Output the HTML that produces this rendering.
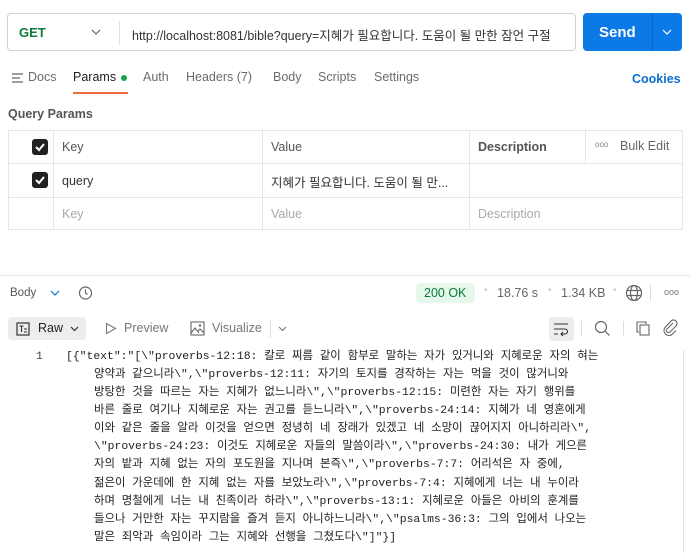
<!DOCTYPE html>
<html><head><meta charset="utf-8"><style>
*{box-sizing:border-box;margin:0;padding:0}
body{width:690px;height:553px;background:#fff;font-family:"Liberation Sans","Noto Sans CJK KR",sans-serif;color:#212121;position:relative;overflow:hidden;font-size:12.5px}
.a{position:absolute;white-space:nowrap}
.tab{position:absolute;top:70px;font-size:12.5px;color:#6b6b6b}
.code{position:absolute;left:0;font-family:"Liberation Mono","Noto Sans CJK KR",monospace;font-size:11.4px;color:#212121;white-space:pre;line-height:18.1px}
.cb{position:absolute;width:16px;height:16px;background:#212121;border-radius:3px}
.cb svg{position:absolute;left:2px;top:2px}
</style></head><body>
<div class="a" style="left:7px;top:13px;width:569px;height:38px;border:1px solid #d0d0d0;border-radius:4px"></div>
<div class="a" style="left:19px;top:25px;font-weight:bold;color:#0f7a3a;font-size:13px">GET</div>
<svg class="a" style="left:91px;top:29px" width="10" height="7"><path d="M1 1l4 4 4-4" stroke="#666" fill="none" stroke-width="1.2"/></svg>
<div class="a" style="left:119px;top:21px;width:1px;height:24px;background:#e0e0e0"></div>
<div class="a" style="left:132px;top:25px;font-size:12.5px;color:#333">http://localhost:8081/bible?query=지혜가 필요합니다. 도움이 될 만한 잠언 구절</div>
<div class="a" style="left:583px;top:13px;width:99px;height:38px;background:#0b7ae6;border-radius:4px"></div>
<div class="a" style="left:652px;top:13px;width:1px;height:38px;background:#0a68c4"></div>
<div class="a" style="left:599px;top:24px;font-weight:bold;color:#fff;font-size:15px">Send</div>
<svg class="a" style="left:662px;top:29px" width="10" height="7"><path d="M1 1l4 4 4-4" stroke="#fff" fill="none" stroke-width="1.2"/></svg>
<svg class="a" style="left:12px;top:72px" width="12" height="12"><path d="M0 2h11M0 6h8M0 10h11" stroke="#666" stroke-width="1.2"/></svg>
<div class="tab" style="left:28px">Docs</div>
<div class="tab" style="left:73px;color:#212121">Params</div>
<div class="a" style="left:121px;top:75px;width:6px;height:6px;border-radius:50%;background:#1aa34a"></div>
<div class="a" style="left:73px;top:92px;width:55px;height:2px;background:#f26b3a"></div>
<div class="tab" style="left:143px">Auth</div>
<div class="tab" style="left:186px">Headers (7)</div>
<div class="tab" style="left:273px">Body</div>
<div class="tab" style="left:318px">Scripts</div>
<div class="tab" style="left:374px">Settings</div>
<div class="a" style="left:632px;top:72px;color:#0b6fd0;font-weight:bold;font-size:12.5px">Cookies</div>
<div class="a" style="left:8px;top:107px;color:#555;font-weight:bold;font-size:12.5px">Query Params</div>
<div class="a" style="left:8px;top:130px;width:675px;height:100px;border:1px solid #e6e6e6"></div>
<div class="a" style="left:8px;top:163px;width:675px;height:1px;background:#e6e6e6"></div>
<div class="a" style="left:8px;top:197px;width:675px;height:1px;background:#e6e6e6"></div>
<div class="a" style="left:53px;top:130px;width:1px;height:100px;background:#e6e6e6"></div>
<div class="a" style="left:262px;top:130px;width:1px;height:100px;background:#e6e6e6"></div>
<div class="a" style="left:469px;top:130px;width:1px;height:100px;background:#e6e6e6"></div>
<div class="a" style="left:585px;top:130px;width:1px;height:33px;background:#e6e6e6"></div>
<div class="cb" style="left:32px;top:139px"><svg width="12" height="12"><path d="M2 6l3 3 5-6" stroke="#fff" stroke-width="2" fill="none"/></svg></div>
<div class="cb" style="left:32px;top:172px"><svg width="12" height="12"><path d="M2 6l3 3 5-6" stroke="#fff" stroke-width="2" fill="none"/></svg></div>
<div class="a" style="left:62px;top:140px;color:#555">Key</div>
<div class="a" style="left:271px;top:140px;color:#555">Value</div>
<div class="a" style="left:478px;top:140px;color:#555;font-weight:bold">Description</div>
<div class="a" style="left:595px;top:140px;color:#888;font-size:8px">ooo</div>
<div class="a" style="left:620px;top:139px;color:#666">Bulk Edit</div>
<div class="a" style="left:62px;top:174px;color:#333">query</div>
<div class="a" style="left:271px;top:172px;color:#333">지혜가 필요합니다. 도움이 될 만...</div>
<div class="a" style="left:62px;top:207px;color:#aaa">Key</div>
<div class="a" style="left:271px;top:207px;color:#aaa">Value</div>
<div class="a" style="left:478px;top:207px;color:#aaa">Description</div>
<div class="a" style="left:0;top:275px;width:690px;height:1px;background:#e6e6e6"></div>
<div class="a" style="left:10px;top:287px;font-size:11.5px;color:#555">Body</div>
<svg class="a" style="left:50px;top:290px" width="10" height="7"><path d="M1 1l4 4 4-4" stroke="#0b6fd0" fill="none" stroke-width="1.2"/></svg>
<svg class="a" style="left:77px;top:285px" width="16" height="16"><circle cx="8.5" cy="8" r="6" stroke="#666" fill="none" stroke-width="1.2"/><path d="M8.5 4.5v3.5l2 1.5" stroke="#666" fill="none" stroke-width="1.2"/></svg>
<div class="a" style="left:416px;top:283px;width:59px;height:20px;background:#e5f8eb;border-radius:4px"></div>
<div class="a" style="left:424px;top:286px;color:#0a7c3b;font-size:12.5px">200 OK</div>
<div class="a" style="left:484px;top:285px;color:#ccc;font-size:10px">•</div>
<div class="a" style="left:497px;top:286px;color:#666">18.76 s</div>
<div class="a" style="left:548px;top:285px;color:#ccc;font-size:10px">•</div>
<div class="a" style="left:561px;top:286px;color:#666">1.34 KB</div>
<div class="a" style="left:613px;top:285px;color:#ccc;font-size:10px">•</div>
<svg class="a" style="left:625px;top:284px" width="18" height="18"><circle cx="9" cy="9" r="7.5" stroke="#666" fill="none" stroke-width="1.2"/><ellipse cx="9" cy="9" rx="3.5" ry="7.5" stroke="#666" fill="none" stroke-width="1.2"/><path d="M1.5 6.5h15M1.5 11.5h15" stroke="#666" stroke-width="1.2"/></svg>
<div class="a" style="left:650px;top:285px;width:1px;height:16px;background:#ddd"></div>
<div class="a" style="left:664px;top:287px;color:#777;font-size:9px">ooo</div>
<div class="a" style="left:8px;top:317px;width:78px;height:23px;background:#ededed;border-radius:4px"></div>
<svg class="a" style="left:16px;top:322px" width="14" height="14"><rect x="1" y="1" width="12" height="12" stroke="#333" fill="none" stroke-width="1.2"/><path d="M3.5 4h4M5.5 4v6M8 7h3M8 10h3" stroke="#333" stroke-width="1.1"/></svg>
<div class="a" style="left:38px;top:321px;color:#212121">Raw</div>
<svg class="a" style="left:70px;top:326px" width="9" height="6"><path d="M1 1l3.5 3.5 3.5-3.5" stroke="#333" fill="none" stroke-width="1.2"/></svg>
<svg class="a" style="left:105px;top:322px" width="12" height="13"><path d="M1.5 1.5l9 5-9 5z" stroke="#777" fill="none" stroke-width="1.1"/></svg>
<div class="a" style="left:124px;top:321px;color:#777">Preview</div>
<svg class="a" style="left:190px;top:321px" width="15" height="15"><rect x="1" y="1" width="13" height="13" stroke="#666" fill="none" stroke-width="1.1"/><path d="M1 12l4-5 4 5M8 10l2-2 4 4" stroke="#666" fill="none" stroke-width="1.1"/><circle cx="10" cy="4.5" r="1.2" fill="#666"/></svg>
<div class="a" style="left:212px;top:321px;color:#777">Visualize</div>
<div class="a" style="left:270px;top:320px;width:1px;height:18px;background:#ddd"></div>
<svg class="a" style="left:278px;top:326px" width="9" height="6"><path d="M1 1l3.5 3.5 3.5-3.5" stroke="#777" fill="none" stroke-width="1.1"/></svg>
<div class="a" style="left:549px;top:317px;width:25px;height:24px;background:#ededed;border-radius:3px"></div>
<svg class="a" style="left:553px;top:321px" width="17" height="16"><path d="M1 3h14M1 8h11a2.5 2.5 0 0 1 0 5H8M10 11l-2 2 2 2M1 13h4" stroke="#333" fill="none" stroke-width="1.1"/></svg>
<div class="a" style="left:581px;top:321px;width:1px;height:15px;background:#ddd"></div>
<svg class="a" style="left:594px;top:320px" width="17" height="17"><circle cx="7" cy="7" r="5.5" stroke="#666" fill="none" stroke-width="1.2"/><path d="M11 11l4.5 4.5" stroke="#666" stroke-width="1.2"/></svg>
<div class="a" style="left:623px;top:321px;width:1px;height:15px;background:#ddd"></div>
<svg class="a" style="left:635px;top:320px" width="16" height="17"><path d="M4 12H2V2h9v2" stroke="#666" fill="none" stroke-width="1.1"/><rect x="5" y="5" width="9" height="10" stroke="#666" fill="none" stroke-width="1.1"/></svg>
<svg class="a" style="left:662px;top:319px" width="17" height="18"><path d="M11 4l-6 6a2 2 0 0 0 3 3l6-6a3.5 3.5 0 0 0-5-5L3 8.5a5 5 0 0 0 7 7l4-4" stroke="#666" fill="none" stroke-width="1.1"/></svg>
<div class="a" style="left:683px;top:350px;width:1px;height:203px;background:#e0e0e0"></div>
<div class="code" style="left:36px;top:348px;color:#444">1</div>
<div class="code" style="left:66px;top:348px">[{"text":"[\"proverbs-12:18: 칼로 찌름 같이 함부로 말하는 자가 있거니와 지혜로운 자의 혀는</div>
<div class="code" style="left:94px;top:366px">양약과 같으니라\",\"proverbs-12:11: 자기의 토지를 경작하는 자는 먹을 것이 많거니와
방탕한 것을 따르는 자는 지혜가 없느니라\",\"proverbs-12:15: 미련한 자는 자기 행위를
바른 줄로 여기나 지혜로운 자는 권고를 듣느니라\",\"proverbs-24:14: 지혜가 네 영혼에게
이와 같은 줄을 알라 이것을 얻으면 정녕히 네 장래가 있겠고 네 소망이 끊어지지 아니하리라\",
\"proverbs-24:23: 이것도 지혜로운 자들의 말씀이라\",\"proverbs-24:30: 내가 게으른
자의 밭과 지혜 없는 자의 포도원을 지나며 본즉\",\"proverbs-7:7: 어리석은 자 중에,
젊은이 가운데에 한 지혜 없는 자를 보았노라\",\"proverbs-7:4: 지혜에게 너는 내 누이라
하며 명철에게 너는 내 친족이라 하라\",\"proverbs-13:1: 지혜로운 아들은 아비의 훈계를
들으나 거만한 자는 꾸지람을 즐겨 듣지 아니하느니라\",\"psalms-36:3: 그의 입에서 나오는
말은 죄악과 속임이라 그는 지혜와 선행을 그쳤도다\"]"}]</div>
</body></html>
